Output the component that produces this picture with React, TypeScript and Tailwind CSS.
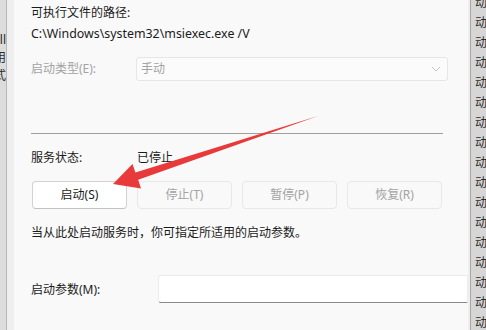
import React from "react";

const font = { fontFamily: '"Noto Sans", "Noto Sans CJK SC", sans-serif' };

const controls = [
  { label: "启动(S)", enabled: true },
  { label: "停止(T)", enabled: false },
  { label: "暂停(P)", enabled: false },
  { label: "恢复(R)", enabled: false }
];

export default function App() {
  return (
    <div className="relative flex h-[330px] w-[486px] overflow-hidden bg-[#f9f9f9] text-[12px] text-[#1b1b1b]" style={font}>
      <LeftEdge />

      <main className="flex min-w-0 flex-1 flex-col pl-[17px] pt-[5px]">
        <div className="h-4 leading-4">可执行文件的路径:</div>
        <div className="mt-[5px] h-4 text-[12.4px] leading-4">C:\Windows\system32\msiexec.exe /V</div>

        <div className="mt-[15px] flex items-center">
          <span className="w-[105px] text-[#a3a3a3]">启动类型(E):</span>
          <div className="flex h-6 w-[312px] items-center justify-between rounded-[3px] border border-[#e6e6e6] bg-[#fbfbfb] pl-[4px] pr-[6px] text-[#a3a3a3]">
            <span>手动</span>
            <svg width="10" height="6" viewBox="0 0 10 6" fill="none">
              <path d="M1 1l4 4 4-4" stroke="#c4c4c4" strokeWidth="1" />
            </svg>
          </div>
        </div>

        <div className="mt-[52px] h-px w-[412px] bg-[#a0a0a0]" />

        <div className="mt-4 flex h-4 items-center leading-4">
          <span className="w-[106px]">服务状态:</span>
          <span>已停止</span>
        </div>

        <div className="mt-[15px] flex gap-[10px] pl-px">
          {controls.map((control) => (
            <button
              key={control.label}
              type="button"
              className={
                control.enabled
                  ? "h-7 w-[95px] rounded-[4px] border border-[#d2d2d2] border-b-[#c2c2c2] bg-white text-[12px] text-[#1b1b1b]"
                  : "h-7 w-[95px] rounded-[4px] border border-[#e8e8e8] bg-[#f9f9f9] text-[12px] text-[#a3a3a3]"
              }
            >
              {control.label}
            </button>
          ))}
        </div>

        <div className="mt-4 h-4 leading-4">当从此处启动服务时，你可指定所适用的启动参数。</div>

        <div className="mt-[34px] flex items-center">
          <span className="w-[127px] pt-[2px]">启动参数(M):</span>
          <div className="h-7 flex-1 rounded-l-[3px] border border-[#ececec] border-b-[#8a8a8a] bg-white" />
        </div>
      </main>

      <RightEdge />

      <svg className="pointer-events-none absolute left-0 top-0" width="486" height="330" viewBox="0 0 486 330">
        <polygon
          points="113,184 132.5,164 135.4,172.6 318,116 138.2,179.8 141,188.5"
          fill="#e83a3a"
        />
      </svg>
    </div>
  );
}

function LeftEdge() {
  return (
    <div className="flex h-full w-[14px] shrink-0">
      <div className="flex h-full w-[6px] flex-col items-end overflow-hidden bg-[#dcdcdc] pt-[31px] text-[12px] leading-[18px] text-[#2a2a2a]">
        <span className="whitespace-nowrap">ll</span>
        <span className="whitespace-nowrap">用</span>
        <span className="whitespace-nowrap">式</span>
      </div>
      <div className="h-full w-px bg-[#b8b8b8]" />
      <div className="h-full flex-1 bg-[#eeeeee]" />
    </div>
  );
}

function RightEdge() {
  return (
    <div className="flex h-full w-[18px] shrink-0">
      <div className="h-full w-[2px] bg-[#efefef]" />
      <div className="h-full w-px bg-[#a8a8a8]" />
      <div className="flex h-full flex-1 flex-col overflow-hidden bg-[#d6d6d6] pl-[4px] text-[12px] leading-[20px] text-[#2a2a2a]">
        <div className="-mt-[7px] flex flex-col">
          {Array.from({ length: 17 }).map((_, index) => (
            <span key={index} className="whitespace-nowrap">动</span>
          ))}
        </div>
      </div>
    </div>
  );
}
